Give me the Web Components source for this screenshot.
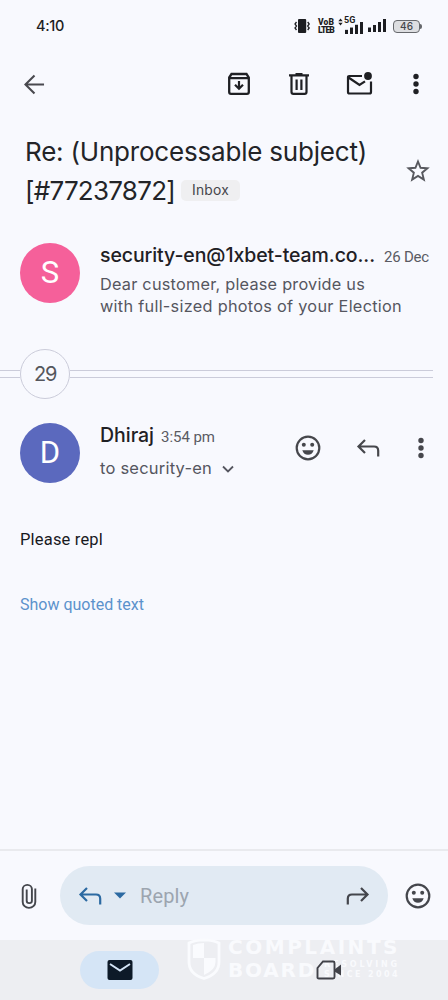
<!DOCTYPE html>
<html lang="en">
<head>
<meta charset="utf-8">
<title>Mail conversation</title>
<style>
html,body{margin:0;padding:0}
body{background:#f8f9fe;font-family:Inter,Roboto,sans-serif;color:#202125;overflow:hidden}
</style>
</head>
<body>
<mail-app></mail-app>
<script>
const define=(name,html,setup)=>{
  const t=document.createElement('template');
  t.innerHTML='<style>:host{display:block;box-sizing:border-box}*{box-sizing:border-box}</style>'+html;
  customElements.define(name,class extends HTMLElement{
    connectedCallback(){
      if(this.shadowRoot)return;
      this.attachShadow({mode:'open'}).append(t.content.cloneNode(true));
      if(setup)setup(this,this.shadowRoot);
    }
  });
};

const stroke='fill="none" stroke="currentColor"';
const ICONS={
  back:[22,22,`<path d="M21 11H2M11 1.500L1.500 11l9.500 9.500" ${stroke} stroke-width="2.200"/>`],
  archive:[24,24,`<path d="M2.200 5.500L4.500 2h15l2.300 3.500V20q0 1.800-1.800 1.800H4q-1.800 0-1.800-1.800zM2.500 6.200h19" ${stroke} stroke-width="2.300"/><path d="M12 9v7.500M8 12.700l4 4 4-4" ${stroke} stroke-width="2.200"/>`],
  trash:[22,24,`<path d="M1 3.300h20M7.500 2h7M3.500 3.500V20q0 1.900 1.900 1.900h11.200q1.900 0 1.900-1.900V3.500M8.600 7.500v10.500M13.400 7.500v10.500" ${stroke} stroke-width="2.200"/>`],
  unread:[27,24,`<path d="M16 4H3.200Q2 4 2 5.200V20q0 1.500 1.500 1.500h20Q25 21.500 25 20V9.500M2.500 5.500l11 7.500 5.500-3.700" ${stroke} stroke-width="2.200"/><circle cx="22" cy="4" r="3.900" fill="currentColor"/>`],
  more:[6,22,`<g fill="currentColor"><circle cx="3" cy="3.500" r="2.700"/><circle cx="3" cy="11" r="2.700"/><circle cx="3" cy="18.500" r="2.700"/></g>`],
  star:[24,24,`<path d="M12 2.500l2.550 6.300 6.850.55-5.250 4.350 1.700 6.900L12 16.900l-5.850 3.700 1.700-6.900L2.600 9.350l6.850-.55z" ${stroke} stroke-width="1.900"/>`],
  smile:[26,26,`<circle cx="13" cy="13" r="11.300" ${stroke} stroke-width="2.200"/><circle cx="8.800" cy="9.800" r="2" fill="currentColor"/><circle cx="17.200" cy="9.800" r="2" fill="currentColor"/><path d="M7.300 15.300h11.400q-1.500 4.500-5.700 4.500t-5.700-4.500z" fill="currentColor"/>`],
  reply:[24,20,`<path d="M9 2L2.500 8.500 9 15M2.500 8.500H18q4.200 0 4.200 4.200V18.500" ${stroke} stroke-width="2.200"/>`],
  forward:[24,20,`<path d="M15 2l6.500 6.500L15 15M21.500 8.500H6q-4.200 0-4.200 4.200V18.500" ${stroke} stroke-width="2.200"/>`],
  chevron:[12,8,`<path d="M1 1.500l5 5 5-5" ${stroke} stroke-width="1.800"/>`],
  caret:[12,7,`<path d="M0 .5h12L6 6.500z" fill="currentColor"/>`],
  clip:[16,28,`<path d="M14.300 6v14.500a6.200 6.200 0 0 1-12.600 0V6.500a4.600 4.600 0 0 1 9.200 0v12.700a2.600 2.600 0 0 1-5.200 0V7" ${stroke} stroke-width="1.900"/>`],
  mail:[26,20,`<rect x=".5" width="25" height="20" rx="2" fill="currentColor"/><path d="M3 4l10 6.500L23 4" fill="none" stroke="#d4e5f6" stroke-width="2"/>`],
  video:[26,20,`<path d="M7 1.500h10q1.500 0 1.500 1.500v14q0 1.500-1.500 1.500H3q-1.800 0-1.500-1.600V8z" ${stroke} stroke-width="1.900"/><path d="M18.500 9.500L25 4.500v11l-6.500-4z" fill="currentColor"/>`],
  vibrate:[16,16,`<rect x="4" y="1" width="8.200" height="14" rx="1" fill="currentColor"/><path d="M2.500 4L1 6l1.500 2L1 10l1.500 2M13.700 4l1.500 2-1.500 2 1.500 2-1.500 2" ${stroke} stroke-width="1.300"/>`],
  signal:[18,13,`<g fill="currentColor"><rect y="8.500" width="3" height="4.500"/><rect x="5" y="6" width="3" height="7"/><rect x="10" y="3" width="3" height="10"/><rect x="15" width="3" height="13"/></g>`],
  updown:[5,8,`<path d="M.3 3.200L2.500.5l2.200 2.700zM.3 4.800l2.200 2.700 2.200-2.700z" fill="currentColor"/>`],
  shield:[34,42,`<path d="M17 1.800Q26 2 32 5v19q0 12-15 16.500Q2 36 2 24V5q6-3 15-3.200z" fill="none" stroke="#fafbfe" stroke-width="2.800"/><path d="M6 7q5-2 11-2v15H6zM17 20h11.500v4q0 8-11.500 13z" fill="#fafbfe"/>`]
};
define('mail-icon','<style>:host{flex:none;line-height:0}svg{display:block}</style><span></span>',(el,root)=>{
  const [w,h,body]=ICONS[el.getAttribute('name')];
  root.querySelector('span').innerHTML=`<svg width="${el.getAttribute('w')||w}" height="${el.getAttribute('h')||h}" viewBox="0 0 ${w} ${h}" preserveAspectRatio="none">${body}</svg>`;
});

/* A single line of text whose tracking is adjusted to fill a given measure. */
define('fit-text','<style>:host{flex:none;white-space:nowrap}span{display:inline-block}</style><span><slot></slot></span>',(el,root)=>{
  const span=root.querySelector('span'),w=+el.getAttribute('w');
  el.style.width=w+'px';
  span.style.letterSpacing='0px';
  span.style.letterSpacing=(w-span.getBoundingClientRect().width)/Math.max(1,el.textContent.length)+'px';
});

define('status-bar',`<style>
:host{height:52px;display:flex;align-items:center;padding:0 26px 0 36px;color:#1d1e22}
.time{font:500 14.500px/20px Inter,sans-serif;margin-right:auto}
mail-icon[name=vibrate]{margin-right:8px}
.vo{font:900 8.500px/8px Roboto,sans-serif;width:16px;margin-right:4px}
.net{display:grid;grid-template:18px/7px 19px;width:25px;align-items:end;margin-right:5px}
.net>*{grid-row:1}.net mail-icon[name=updown]{align-self:start;margin-top:1px}
.g{grid-column:2;align-self:start;margin:-1px 0 0 -1px;font:700 9px/9px Roboto,sans-serif}
.net mail-icon[name=signal]{grid-column:2;grid-row:1;margin:0 0 1px 0}
.bars{align-self:flex-start;margin:19px 7px 0 0}
.bat{width:27px;height:13px;border:1.500px solid #66686c;border-radius:4px;background:#dddee1;font:500 10px/10px Inter,sans-serif;text-align:center;color:#44464a}
.cap{width:2px;height:5px;background:#66686c;border-radius:0 2px 2px 0}
</style><fit-text class="time" w="28">4:10</fit-text><mail-icon name="vibrate"></mail-icon>
<div class="vo"><fit-text w="16">VoB</fit-text><fit-text w="16">LTEB</fit-text></div>
<div class="net"><mail-icon name="updown"></mail-icon><mail-icon name="signal" h="12"></mail-icon><span class="g">5G</span></div>
<mail-icon class="bars" name="signal"></mail-icon><div class="bat">46</div><div class="cap"></div>`);

define('top-bar',`<style>
:host{height:64px;display:flex;align-items:center;padding:0 29px 0 24px;color:#1f2024}
.back{margin-right:auto;color:#49494f}
.a{margin-right:37px}.t{margin-right:36px}.u{margin-right:40px}
</style><mail-icon class="back" name="back" w="21" h="21"></mail-icon><mail-icon class="a" name="archive"></mail-icon><mail-icon class="t" name="trash"></mail-icon><mail-icon class="u" name="unread"></mail-icon><mail-icon name="more"></mail-icon>`);

define('mail-subject',`<style>
:host{height:111px;display:flex;align-items:flex-start;justify-content:space-between;padding:16px 18px 0 25px;font:400 26px/39px Inter,sans-serif;color:#232428}
.row{display:flex;align-items:center}
.chip{margin-left:6px;width:59px;height:21px;border-radius:5px;background:#efeff1;display:flex;justify-content:center;font:400 13.800px/21px Inter,sans-serif;color:#45464b}
mail-icon{margin-top:27px;color:#57585e}
</style><div><fit-text w="342">Re: (Unprocessable subject)</fit-text><div class="row"><fit-text w="150">[#77237872]</fit-text><div class="chip"><fit-text w="37">Inbox</fit-text></div></div></div><mail-icon name="star"></mail-icon>`);

define('sender-avatar',`<style>
:host{flex:none;width:60px;height:60px;border-radius:50%;display:grid;place-items:center;font:400 31px/60px Roboto,sans-serif;color:#fff}
</style><slot></slot>`);

define('collapsed-message',`<style>
:host{display:flex;height:122px;padding:16px 18px 0 20px}
sender-avatar{background:#f5609a}
.txt{margin-left:20px}
.head{display:flex;align-items:baseline;height:30px;line-height:24px}
.from{font-size:19.500px;font-weight:500;color:#1f2024}
.date{font:400 15px/24px Roboto,sans-serif;color:#5a5b63;margin-left:9px}
.snip{font:400 16.300px/22px Inter,sans-serif;color:#55565f}
</style><sender-avatar>S</sender-avatar><div class="txt"><div class="head"><fit-text class="from" w="275">security-en@1xbet-team.co...</fit-text><fit-text class="date" w="45">26 Dec</fit-text></div>
<div class="snip"><fit-text w="265">Dear customer, please provide us</fit-text><fit-text w="302">with full-sized photos of your Election</fit-text></div></div>`);

define('thread-divider',`<style>
:host{height:50px;display:grid;grid-template:50px/20px 50px 1fr;padding-right:15px;align-items:center}
.l{height:8px;border:solid #cbccda;border-width:1.500px 0}
.n{height:50px;border:1.500px solid #cbccda;border-radius:50%;display:grid;place-items:center;font:400 20px/46px Inter,sans-serif;color:#55565c}
</style><div class="l"></div><div class="n"><fit-text w="22">29</fit-text></div><div class="l"></div>`);

define('open-message',`<style>
:host{height:450px}
.top{display:flex;padding:24px 24px 0 20px}
sender-avatar{background:#5b69be}
.txt{margin:0 auto 0 20px}
.row{display:flex;align-items:baseline;height:32px;line-height:24px}
.name{font-size:19.500px;font-weight:500;color:#1f2024}
.time{font:400 15px/24px Roboto,sans-serif;color:#5a5b63;margin-left:7px}
.to{display:flex;align-items:center;font:400 16.500px/26px Inter,sans-serif;color:#55565f}
.to mail-icon{margin:1px 0 0 10px}
.acts{display:flex;align-items:center;height:50px;color:#46474c}
.body{font:400 16.500px/24px Roboto,sans-serif;color:#191a1e;margin:45px 0 0 20px}
.quote{font:400 16px/24px Roboto,sans-serif;color:#5c92cc;margin:41px 0 0 20px}
</style><div class="top"><sender-avatar>D</sender-avatar><div class="txt"><div class="row"><fit-text class="name" w="54">Dhiraj</fit-text><fit-text class="time" w="54">3:54 pm</fit-text></div><div class="to"><fit-text w="112">to security-en</fit-text><mail-icon name="chevron"></mail-icon></div></div>
<div class="acts"><mail-icon name="smile"></mail-icon><mail-icon name="reply" style="margin:0 38px 0 35px"></mail-icon><mail-icon name="more"></mail-icon></div></div>
<fit-text class="body" w="83">Please repl</fit-text><fit-text class="quote" w="124">Show quoted text</fit-text>`);

define('reply-bar',`<style>
:host{height:91px;border-top:2px solid #e9eaee;display:flex;align-items:flex-start;padding:15px 17px 0 21px;color:#44464c}
.row{display:flex;align-items:center;height:59px}
.pill{width:328px;height:59px;margin:0 17px 0 23px;border-radius:30px;background:#e1eaf3;display:flex;align-items:center;padding:0 18px}
.b{color:#2c6aa2}
.ph{font:400 20px/28px Roboto,sans-serif;color:#9ca5af;margin:0 auto 0 14px}
</style><div class="row"><mail-icon name="clip" h="26"></mail-icon><div class="pill"><mail-icon class="b" name="reply"></mail-icon><mail-icon class="b" name="caret" style="margin-left:12px"></mail-icon><fit-text class="ph" w="49">Reply</fit-text><mail-icon name="forward"></mail-icon></div><mail-icon name="smile"></mail-icon></div>`);

define('bottom-nav',`<style>
:host{height:60px;background:#edeef2;display:flex;align-items:center;padding-left:80px;position:relative}
.tab{width:79px;height:38px;border-radius:19px;background:#d5e5f6;display:grid;place-items:center;color:#0d1a28}
.video{margin-left:157px;color:#404148;z-index:1}
.mark{position:absolute;left:187px;top:-2px;display:flex;color:#f9fafd}
.words{margin:-2px 0 0 7px;font:700 20px/23px "DejaVu Sans",sans-serif}
.second{display:flex;align-items:flex-start;gap:8px}
.small{margin-top:1px;font:700 8px/10px "DejaVu Sans",sans-serif}
</style><div class="tab"><mail-icon name="mail"></mail-icon></div><mail-icon class="video" name="video"></mail-icon>
<div class="mark"><mail-icon name="shield"></mail-icon><div class="words"><fit-text w="172">COMPLAINTS</fit-text><div class="second"><fit-text w="88">BOARD</fit-text><div class="small"><fit-text w="76">RESOLVING</fit-text><fit-text w="76">SINCE 2004</fit-text></div></div></div></div>`);

define('mail-app',`<style>
:host{display:flex;flex-direction:column;width:448px;height:1000px;background:#f8f9fe;overflow:hidden}
:host>*{flex:none}
</style><status-bar></status-bar><top-bar></top-bar><mail-subject></mail-subject><collapsed-message></collapsed-message><thread-divider></thread-divider><open-message></open-message><reply-bar></reply-bar><bottom-nav></bottom-nav>`);
</script>
</body>
</html>
